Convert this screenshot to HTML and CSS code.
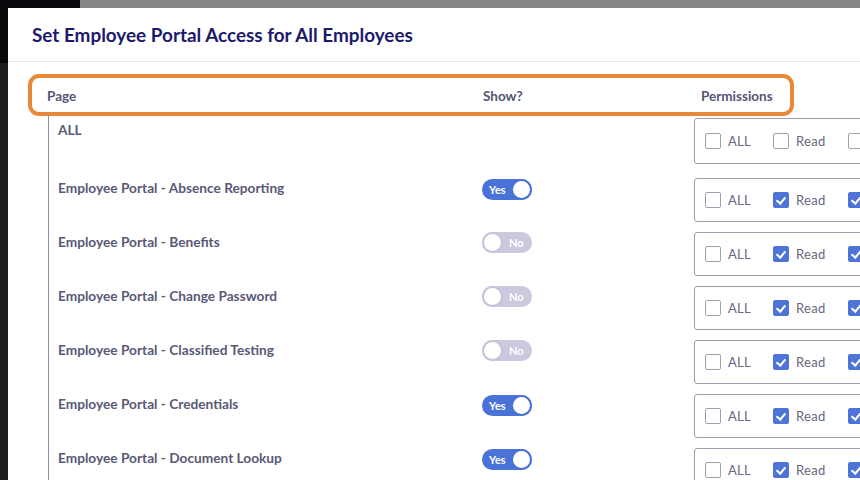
FILE: index.html
```html
<!DOCTYPE html>
<html>
<head>
<meta charset="utf-8">
<link rel="stylesheet" href="styles.css">
</head>
<body>
<div class="screen">
  <div class="topbar"><div class="top-dark"></div><div class="top-gray"></div></div>
  <div class="main">
    <div class="side"></div>
    <div class="modal">
      <div class="modal-header"><h1>Set Employee Portal Access for All Employees</h1></div>
      <div class="modal-body">
        <div class="thead">
          <div>Page</div>
          <div>Show?</div>
          <div>Permissions</div>
        </div>
        <div class="tbody">
          <div class="row row-all">
            <div class="label">ALL</div>
            <div></div>
            <div class="perms">
              <span class="cb"></span><span class="ct">ALL</span>
              <span class="cb"></span><span class="ct">Read</span>
              <span class="cb"></span>
            </div>
          </div>
          <div class="row">
            <div class="label">Employee Portal - Absence Reporting</div>
            <div><span class="toggle on"><span class="tt">Yes</span><span class="knob"></span></span></div>
            <div class="perms">
              <span class="cb"></span><span class="ct">ALL</span>
              <span class="cb on"></span><span class="ct">Read</span>
              <span class="cb on"></span>
            </div>
          </div>
          <div class="row">
            <div class="label">Employee Portal - Benefits</div>
            <div><span class="toggle off"><span class="knob"></span><span class="tt">No</span></span></div>
            <div class="perms">
              <span class="cb"></span><span class="ct">ALL</span>
              <span class="cb on"></span><span class="ct">Read</span>
              <span class="cb on"></span>
            </div>
          </div>
          <div class="row">
            <div class="label">Employee Portal - Change Password</div>
            <div><span class="toggle off"><span class="knob"></span><span class="tt">No</span></span></div>
            <div class="perms">
              <span class="cb"></span><span class="ct">ALL</span>
              <span class="cb on"></span><span class="ct">Read</span>
              <span class="cb on"></span>
            </div>
          </div>
          <div class="row">
            <div class="label">Employee Portal - Classified Testing</div>
            <div><span class="toggle off"><span class="knob"></span><span class="tt">No</span></span></div>
            <div class="perms">
              <span class="cb"></span><span class="ct">ALL</span>
              <span class="cb on"></span><span class="ct">Read</span>
              <span class="cb on"></span>
            </div>
          </div>
          <div class="row">
            <div class="label">Employee Portal - Credentials</div>
            <div><span class="toggle on"><span class="tt">Yes</span><span class="knob"></span></span></div>
            <div class="perms">
              <span class="cb"></span><span class="ct">ALL</span>
              <span class="cb on"></span><span class="ct">Read</span>
              <span class="cb on"></span>
            </div>
          </div>
          <div class="row">
            <div class="label">Employee Portal - Document Lookup</div>
            <div><span class="toggle on"><span class="tt">Yes</span><span class="knob"></span></span></div>
            <div class="perms">
              <span class="cb"></span><span class="ct">ALL</span>
              <span class="cb on"></span><span class="ct">Read</span>
              <span class="cb on"></span>
            </div>
          </div>
        </div>
      </div>
    </div>
  </div>
</div>
</body>
</html>
```
FILE: styles.css
```css
html, body {
  margin: 0;
  padding: 0;
  width: 860px;
  height: 480px;
  overflow: hidden;
  background: #1e1e1e;
  font-family: Lato, "Open Sans", sans-serif;
}
.screen {
  display: flex;
  flex-direction: column;
  height: 480px;
}
.topbar {
  display: flex;
  height: 8px;
  flex: none;
}
.top-dark { width: 80px; background: #08080d; }
.top-gray { flex: 1; background: #868686; }
.main {
  display: flex;
  flex: 1;
  min-height: 0;
}
.side {
  width: 8px;
  flex: none;
  background: linear-gradient(#08080d 0, #08080d 55px, #1e1e1e 55px);
}
.modal {
  flex: 1;
  background: #fff;
  min-width: 0;
  overflow: hidden;
}
.modal-header {
  height: 54px;
  border-bottom: 1px solid #e8e8ec;
  display: flex;
  align-items: center;
  padding-left: 24px;
  box-sizing: border-box;
}
.modal-header h1 {
  margin: 0;
  font-size: 18.9px;
  font-weight: 700;
  color: #1b1a6b;
}
.modal-body {
  padding: 12px 0 0 20px;
}
.thead {
  width: 766px;
  height: 42px;
  box-sizing: border-box;
  border: 4px solid #e8893a;
  border-radius: 11px;
  display: grid;
  grid-template-columns: 436px 218px 1fr;
  align-items: center;
  padding: 2px 0 0 15px;
  font-size: 13.5px;
  font-weight: 700;
  color: #555575;
}
.tbody {
  margin-left: 20px;
  border-left: 1px solid #8f8fa0;
  padding: 2px 0 0 9px;
}
.row {
  display: grid;
  grid-template-columns: 424px 212px 320px;
  align-items: start;
  height: 54px;
}
.row-all {
  height: 60px;
}
.label {
  font-size: 13.7px;
  font-weight: 700;
  color: #595978;
  padding-top: 1px;
  line-height: 17px;
}
.row-all .label { padding-top: 3px; }
.perms {
  height: 44px;
  box-sizing: border-box;
  border: 1px solid #9c9cac;
  border-radius: 3px;
  display: flex;
  align-items: center;
  padding-left: 10px;
}
.row-all .perms { height: 46px; }
.cb {
  width: 16px;
  height: 16px;
  box-sizing: border-box;
  border: 1px solid #a0a0ae;
  border-radius: 2px;
  background: #fff;
  flex: none;
  position: relative;
}
.cb.on {
  background: #4d74d6;
  border-color: #4d74d6;
}
.cb.on::after {
  content: "";
  position: absolute;
  left: 4px;
  top: 2px;
  width: 4px;
  height: 7px;
  border: solid #fff;
  border-width: 0 2px 2px 0;
  transform: rotate(40deg);
}
.ct {
  font-size: 13px;
  color: #676780;
  margin: 0 22px 0 7px;
  letter-spacing: 0.3px;
}
.toggle {
  display: inline-flex;
  align-items: center;
  width: 50px;
  height: 21px;
  border-radius: 11px;
  box-sizing: border-box;
  font-size: 11px;
  font-weight: 700;
  color: #fff;
}
.toggle.on {
  background: #4a73d8;
  padding-left: 7px;
  justify-content: space-between;
}
.toggle.off {
  background: #cac9de;
}
.knob {
  width: 21px;
  height: 21px;
  box-sizing: border-box;
  border-radius: 50%;
  background: #fff;
  border: 2px solid #4a73d8;
}
.toggle.off .knob {
  border-color: #c4c3da;
}
.toggle.off .tt {
  margin-left: 6px;
}
```
